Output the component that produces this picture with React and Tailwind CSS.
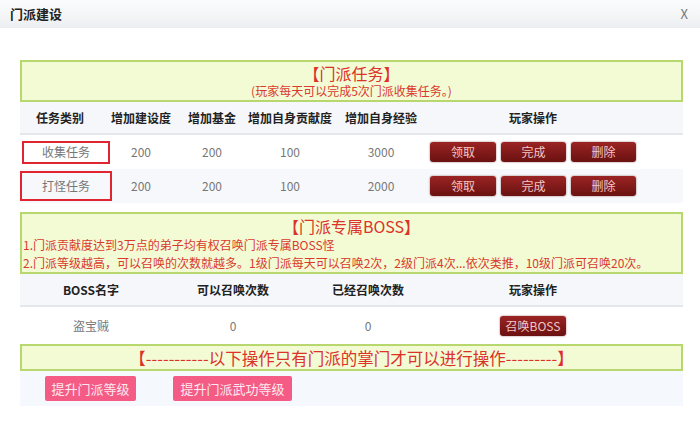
import React from "react";

const font = { fontFamily: '"Noto Sans CJK SC", "Liberation Sans", sans-serif' };

const tasks = [
  { name: "收集任务", build: 200, fund: 200, contrib: 100, exp: 3000, box: "w-[88px] h-[23px] ml-[2px]" },
  { name: "打怪任务", build: 200, fund: 200, contrib: 100, exp: 2000, box: "w-[92px] h-[30px]" },
];

const DarkButton = ({ children, className = "" }) => (
  <button
    className={`h-[20px] rounded-[3px] bg-gradient-to-b from-[#9b2424] to-[#6b1111] text-[12px] leading-none text-[#f3c6c6] shadow-[0_0_2px_rgba(80,0,0,0.6)] ${className}`}
  >
    {children}
  </button>
);

const Notice = ({ className = "", children }) => (
  <div className={`border-2 border-[#b9d76f] bg-[#f3fbd5] ${className}`}>{children}</div>
);

export default function App() {
  return (
    <div className="w-[700px] h-[444px] bg-white overflow-hidden" style={font}>
      {/* dialog title bar */}
      <div className="h-[28px] flex items-center justify-between px-[10px] bg-gradient-to-b from-[#fbfcfd] to-[#eceff2]">
        <span className="text-[13px] font-bold text-[#222]">门派建设</span>
        <span className="text-[13px] text-[#777] mr-[2px]">X</span>
      </div>

      <div className="pl-[20px] pr-[17px] pt-[32px]">
        {/* daily tasks */}
        <Notice className="h-[42px] flex flex-col items-center justify-center">
          <div className="text-[16px] leading-[20px] text-[#dc3229]">【门派任务】</div>
          <div className="text-[12px] leading-[16px] text-[#d93a2c]">(玩家每天可以完成5次门派收集任务。)</div>
        </Notice>

        <div className="grid grid-cols-[80px_82px_60px_96px_86px_218px_1fr] h-[33px] items-center bg-[#f5f7fa] border-b-2 border-[#e4e8ed] text-[12px] font-bold text-[#222] text-center">
          <div>任务类别</div>
          <div>增加建设度</div>
          <div>增加基金</div>
          <div>增加自身贡献度</div>
          <div>增加自身经验</div>
          <div>玩家操作</div>
          <div />
        </div>

        {tasks.map((t, i) => (
          <div
            key={t.name}
            className={`grid grid-cols-[80px_82px_60px_96px_86px_218px_1fr] h-[34px] items-center text-[12px] text-[#777] text-center ${
              i % 2 ? "bg-[#f6f8fb]" : "bg-white"
            }`}
          >
            <div className="flex">
              <span className={`flex items-center justify-center border-2 border-[#e02430] text-[#777] shrink-0 ${t.box}`}>
                {t.name}
              </span>
            </div>
            <div>{t.build}</div>
            <div>{t.fund}</div>
            <div>{t.contrib}</div>
            <div>{t.exp}</div>
            <div className="flex justify-center gap-[5px]">
              <DarkButton className="w-[66px]">领取</DarkButton>
              <DarkButton className="w-[65px]">完成</DarkButton>
              <DarkButton className="w-[65px]">删除</DarkButton>
            </div>
            <div />
          </div>
        ))}

        {/* sect boss */}
        <Notice className="mt-[9px] h-[62px] px-[1px] pt-[2px]">
          <div className="text-[16px] leading-[20px] text-center text-[#dc3229]">【门派专属BOSS】</div>
          <div className="text-[12px] leading-[18px] text-[#d93a2c]">1.门派贡献度达到3万点的弟子均有权召唤门派专属BOSS怪</div>
          <div className="text-[12px] leading-[18px] text-[#d93a2c] whitespace-nowrap">
            2.门派等级越高，可以召唤的次数就越多。1级门派每天可以召唤2次，2级门派4次...依次类推，10级门派可召唤20次。
          </div>
        </Notice>

        <div className="grid grid-cols-[142px_142px_128px_202px_1fr] h-[33px] items-center bg-[#f5f7fa] border-b-2 border-[#e4e8ed] text-[12px] font-bold text-[#222] text-center">
          <div>BOSS名字</div>
          <div>可以召唤次数</div>
          <div>已经召唤次数</div>
          <div>玩家操作</div>
          <div />
        </div>
        <div className="grid grid-cols-[142px_142px_128px_202px_1fr] h-[37px] items-center text-[12px] text-[#777] text-center">
          <div>盗宝贼</div>
          <div>0</div>
          <div>0</div>
          <div className="flex justify-center">
            <DarkButton className="w-[66px] text-[12px]">召唤BOSS</DarkButton>
          </div>
          <div />
        </div>

        {/* master-only actions */}
        <Notice className="h-[27px] flex items-center justify-center">
          <span className="text-[16.5px] leading-[20px] text-[#dc3229]">【-----------以下操作只有门派的掌门才可以进行操作---------】</span>
        </Notice>
        <div className="h-[35px] flex items-center gap-[37px] pl-[25px] bg-[#f5f8fc]">
          <button className="h-[25px] w-[91px] rounded-[2px] bg-[#f45c86] text-[13px] text-[#fde9ee]">提升门派等级</button>
          <button className="h-[25px] w-[119px] rounded-[2px] bg-[#f45c86] text-[13px] text-[#fde9ee]">提升门派武功等级</button>
        </div>
      </div>
    </div>
  );
}
